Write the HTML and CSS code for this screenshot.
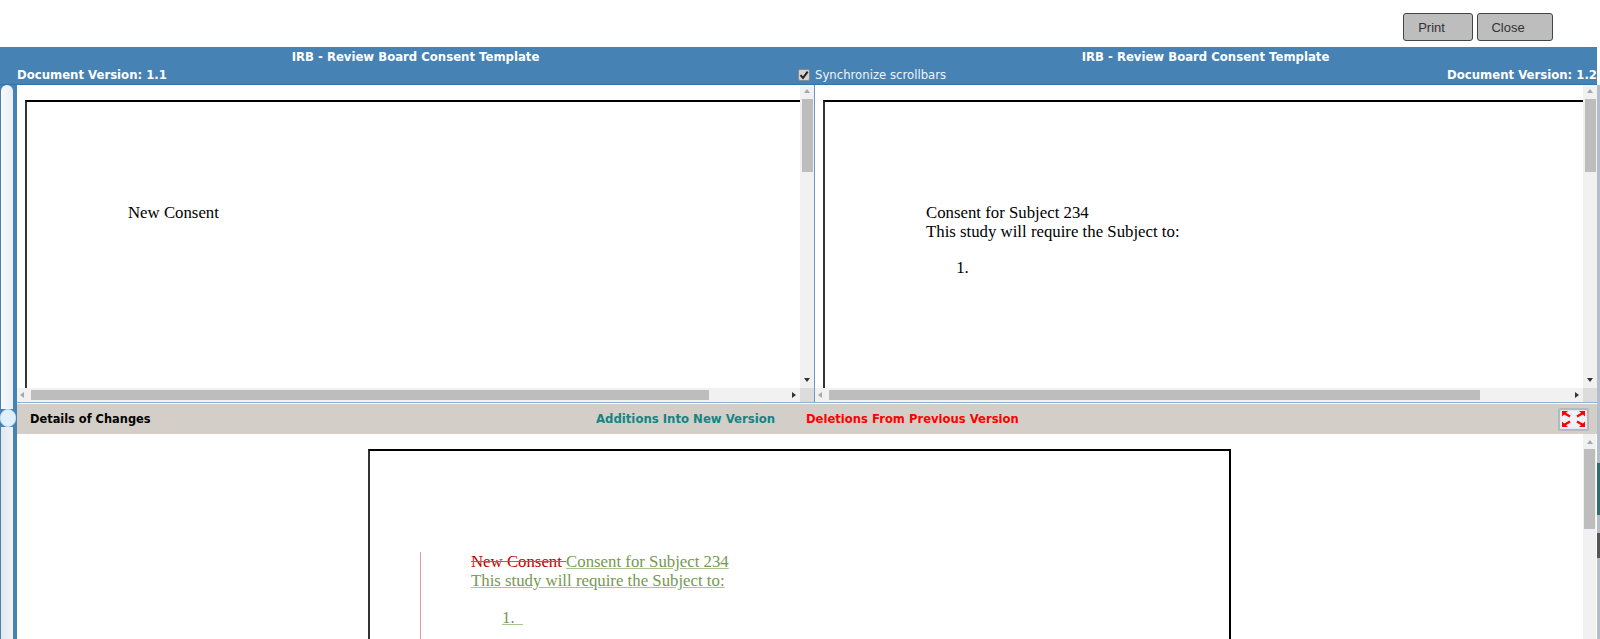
FILE: index.html
```html
<!DOCTYPE html>
<html lang="en">
<head>
    <meta charset="UTF-8">
    <title>Document Version Compare</title>
    <link rel="stylesheet" href="styles.css">
</head>
<body>
<div class="page">
    <div class="toolbar">
        <button class="btn btn-print">Print</button>
        <button class="btn btn-close">Close</button>
    </div>

    <div class="header">
        <div class="titles">
            <div>IRB - Review Board Consent Template</div>
            <div>IRB - Review Board Consent Template</div>
        </div>
        <div class="versions">
            <div class="version-left">Document Version: 1.1</div>
            <label class="sync"><span class="check"><svg width="10" height="10" viewBox="0 0 10 10"><path d="M1.5 5.2 L4 8 L8.7 1.6" fill="none" stroke="#222" stroke-width="2"/></svg></span>Synchronize scrollbars</label>
            <div class="version-right">Document Version: 1.2</div>
        </div>
    </div>

    <div class="main">
        <div class="rail">
            <div class="rail-top"></div>
            <div class="rail-knob"></div>
            <div class="rail-bottom"></div>
        </div>
        <div class="content">
            <div class="panes">
                <div class="pane pane-left">
                    <div class="view">
                        <div class="doc doc-left">
                            <p>New Consent</p>
                        </div>
                    </div>
                    <div class="vbar">
                        <span class="arrow-up"></span>
                        <span class="vthumb"></span>
                        <span class="arrow-down"></span>
                    </div>
                    <div class="hbar">
                        <span class="arrow-left"></span>
                        <span class="hthumb hthumb-left"></span>
                        <span class="arrow-right"></span>
                    </div>
                    <div class="corner"></div>
                </div>
                <div class="pane pane-right">
                    <div class="view">
                        <div class="doc doc-right">
                            <p>Consent for Subject 234</p>
                            <p>This study will require the Subject to:</p>
                            <ol><li></li></ol>
                        </div>
                    </div>
                    <div class="vbar">
                        <span class="arrow-up"></span>
                        <span class="vthumb"></span>
                        <span class="arrow-down"></span>
                    </div>
                    <div class="hbar">
                        <span class="arrow-left"></span>
                        <span class="hthumb hthumb-right"></span>
                        <span class="arrow-right"></span>
                    </div>
                    <div class="corner"></div>
                </div>
            </div>

            <div class="details">
                <div class="details-title">Details of Changes</div>
                <div class="legend-add">Additions Into New Version</div>
                <div class="legend-del">Deletions From Previous Version</div>
                <button class="expand">
                    <svg width="25" height="18" viewBox="0 0 25 18">
                        <g stroke="#f00" stroke-width="2.4" fill="none">
                            <path d="M3 3 L9 6.5"/>
                            <path d="M22 3 L16 6.5"/>
                            <path d="M3 15 L9 11.5"/>
                            <path d="M22 15 L16 11.5"/>
                        </g>
                        <g fill="#f00">
                            <path d="M1 1 H7 L1 6.5 Z"/>
                            <path d="M24 1 H18 L24 6.5 Z"/>
                            <path d="M1 17 H7 L1 11.5 Z"/>
                            <path d="M24 17 H18 L24 11.5 Z"/>
                        </g>
                    </svg>
                </button>
            </div>

            <div class="compare">
                <div class="compare-view">
                    <div class="doc doc-compare">
                        <div class="changes">
                            <p><del>New Consent </del><ins>Consent for Subject 234</ins></p>
                            <p><ins>This study will require the Subject to:</ins></p>
                            <p class="item"><ins>1.&nbsp;&nbsp;</ins></p>
                        </div>
                    </div>
                </div>
                <div class="vbar vbar-compare">
                    <span class="arrow-up"></span>
                    <span class="vthumb vthumb-compare"></span>
                </div>
            </div>
        </div>
    </div>
</div>
<div class="edge">
    <div class="edge-blank"></div>
    <div class="edge-grey edge-first"></div>
    <div class="edge-teal"></div>
    <div class="edge-grey edge-mid"></div>
    <div class="edge-dark"></div>
    <div class="edge-grey edge-last"></div>
</div>
</body>
</html>
```

FILE: styles.css
```css
html, body {
    margin: 0;
    height: 639px;
    overflow: hidden;
    background-color: #fff;
}
body {
    display: flex;
}
.page {
    width: 1597px;
    height: 639px;
    flex: none;
    display: flex;
    flex-direction: column;
    overflow: hidden;
    font-family: "DejaVu Sans", Verdana, sans-serif;
}
.edge {
    flex: 1;
    display: flex;
    flex-direction: column;
}
.edge-blank {
    height: 85px;
}
.edge-first {
    height: 378px;
}
.edge-teal {
    height: 52px;
    background-color: #2f6f6a;
}
.edge-mid {
    height: 18px;
}
.edge-dark {
    height: 25px;
    background-color: #555;
}
.edge-last {
    flex: 1;
}
.edge-grey {
    background-color: #b4bdca;
}
.toolbar {
    height: 47px;
    box-sizing: border-box;
    flex: none;
    display: flex;
    justify-content: flex-end;
    align-items: flex-start;
    gap: 4px;
    padding: 13px 44px 0 0;
}
.btn {
    height: 28px;
    box-sizing: border-box;
    padding: 0;
    border: 1px solid #444;
    border-radius: 3px;
    background-color: #bdbdbd;
    color: #333;
    font-family: "Liberation Sans", Arial, sans-serif;
    font-size: 13px;
}
.btn-print {
    width: 70px;
    padding-right: 13px;
}
.btn-close {
    width: 76px;
    padding-right: 14px;
}
.header {
    flex: none;
    height: 38px;
    box-sizing: border-box;
    background-color: #4682b4;
    border-bottom: 1px solid #2f74ad;
    color: #fff;
    font-size: 11.7px;
    font-weight: bold;
}
.titles {
    display: grid;
    grid-template-columns: 797px 783px;
    padding: 2px 0 0 17px;
    text-align: center;
    height: 16px;
    line-height: 16px;
}
.versions {
    display: flex;
    padding: 2px 0 0 17px;
    height: 16px;
    line-height: 16px;
    overflow: hidden;
}
.version-left {
    width: 781px;
    flex: none;
}
.version-right {
    margin-left: auto;
    white-space: nowrap;
}
.sync {
    display: flex;
    align-items: center;
    gap: 5px;
    font-weight: normal;
    font-size: 11.7px;
    color: #eef4fa;
}
.check {
    width: 12px;
    height: 12px;
    box-sizing: border-box;
    background-color: #d4d4d4;
    border: 1px solid #8a8a8a;
    border-radius: 2px;
    display: flex;
    align-items: center;
    justify-content: center;
}
.main {
    flex: 1;
    display: flex;
    min-height: 0;
}
.rail {
    flex: none;
    width: 17px;
    box-sizing: border-box;
    background-color: #4682b4;
    padding-left: 1px;
    display: flex;
    flex-direction: column;
}
.rail-top {
    width: 12px;
    height: 324px;
    flex: none;
    background: linear-gradient(to right, #f8fafc, #e8eff5);
    border-radius: 6px 6px 0 0;
}
.rail-knob {
    width: 16px;
    height: 18px;
    flex: none;
    margin-left: -1px;
    background-color: #e0f0fc;
    border: 1px solid #c8e0f3;
    box-sizing: border-box;
    border-radius: 9px;
}
.rail-bottom {
    width: 12px;
    flex: 1;
    background: linear-gradient(to right, #e4e8ec, #eef3f7);
}
.content {
    flex: 1;
    min-width: 0;
    display: flex;
    flex-direction: column;
}
.panes {
    flex: none;
    height: 317px;
    display: flex;
    border-bottom: 1px solid #8fb0d3;
}
.pane {
    display: grid;
    grid-template-columns: 1fr 14px;
    grid-template-rows: 1fr 14px;
    min-width: 0;
}
.pane-left {
    width: 797px;
    flex: none;
    border-right: 1px solid #6d97c0;
}
.pane-right {
    flex: 1;
}
.view {
    overflow: hidden;
    padding: 15px 0 0 8px;
}
.doc {
    box-sizing: border-box;
    border: 2px solid #000;
    border-left-color: #333;
    background-color: #fff;
    color: #000;
    font-family: "Liberation Serif", "Times New Roman", serif;
    font-size: 16.8px;
    line-height: 19px;
}
.doc p {
    margin: 0;
}
.doc-left {
    width: 900px;
    height: 400px;
    padding: 101px 0 0 101px;
}
.doc-right {
    width: 900px;
    height: 400px;
    padding: 101px 0 0 101px;
}
.doc-right ol {
    margin: 17px 0 0;
    padding-left: 47px;
}
.vbar {
    background-color: #f1f1f1;
    display: flex;
    flex-direction: column;
    align-items: center;
}
.vthumb {
    width: 11px;
    height: 73px;
    margin-top: 6px;
    background-color: #bdbdbd;
}
.arrow-up {
    margin-top: 4px;
    width: 0;
    height: 0;
    border-left: 3px solid transparent;
    border-right: 3px solid transparent;
    border-bottom: 4px solid #a8a8a8;
}
.arrow-down {
    margin-top: auto;
    margin-bottom: 6px;
    width: 0;
    height: 0;
    border-left: 3px solid transparent;
    border-right: 3px solid transparent;
    border-top: 4px solid #333;
}
.hbar {
    background-color: #f1f1f1;
    display: flex;
    align-items: center;
}
.hthumb {
    height: 10px;
    margin-left: 7px;
    background-color: #bdbdbd;
}
.hthumb-left {
    width: 678px;
}
.hthumb-right {
    width: 651px;
}
.arrow-left {
    margin-left: 3px;
    width: 0;
    height: 0;
    border-top: 3px solid transparent;
    border-bottom: 3px solid transparent;
    border-right: 4px solid #a8a8a8;
}
.arrow-right {
    margin-left: auto;
    margin-right: 4px;
    width: 0;
    height: 0;
    border-top: 3px solid transparent;
    border-bottom: 3px solid transparent;
    border-left: 4px solid #333;
}
.corner {
    background-color: #dcdcdc;
}
.details {
    flex: none;
    height: 30px;
    margin-top: 1px;
    display: flex;
    align-items: center;
    background-color: #d3cfc8;
    font-size: 11.7px;
    font-weight: bold;
}
.details-title {
    width: 566px;
    padding-left: 13px;
    color: #000;
    font-size: 11.4px;
}
.legend-add {
    width: 210px;
    color: #138484;
}
.legend-del {
    color: #f00;
    font-size: 11.6px;
}
.expand {
    margin-left: auto;
    margin-right: 8px;
    width: 31px;
    height: 23px;
    padding: 0;
    border: 2px solid #b4b8c4;
    border-radius: 2px;
    background-color: #f0f2f9;
    box-shadow: inset 0 0 2px #c4c8d4;
    display: flex;
    align-items: center;
    justify-content: center;
}
.compare {
    flex: 1;
    min-height: 0;
    display: flex;
}
.compare-view {
    flex: 1;
    min-width: 0;
    overflow: hidden;
    padding: 15px 0 0 351px;
}
.doc-compare {
    width: 863px;
    height: 400px;
    padding: 101px 0 0 50px;
}
.changes {
    border-left: 1px solid #dfa0a8;
    padding-left: 50px;
    height: 300px;
}
.changes del {
    color: #c00000;
    text-decoration-color: #d84a4a;
}
.changes ins {
    color: #76994f;
    text-decoration-color: #a9c48e;
}
.item {
    margin-top: 18px !important;
    padding-left: 31px;
}
.vbar-compare {
    flex: none;
    width: 13px;
    margin-right: 1px;
}
.vbar-compare .arrow-up {
    margin-top: 6px;
}
.vthumb-compare {
    height: 80px;
    margin-top: 5px;
}
```
